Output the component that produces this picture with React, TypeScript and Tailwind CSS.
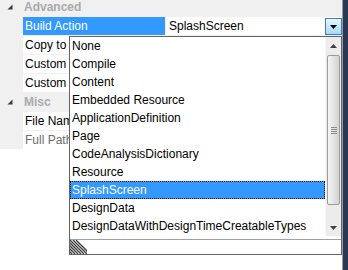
import React from "react";

type Row = {
  label: string;
  header?: boolean;
  selected?: boolean;
  muted?: boolean;
  value?: string;
};

// labels under the open list are clipped at the list's left edge
const rows: Row[] = [
  { label: "Advanced", header: true },
  { label: "Build Action", selected: true, value: "SplashScreen" },
  { label: "Copy to" },
  { label: "Custom" },
  { label: "Custom" },
  { label: "Misc", header: true },
  { label: "File Name" },
  { label: "Full Path", muted: true },
];

const actions = [
  "None",
  "Compile",
  "Content",
  "Embedded Resource",
  "ApplicationDefinition",
  "Page",
  "CodeAnalysisDictionary",
  "Resource",
  "SplashScreen",
  "DesignData",
  "DesignDataWithDesignTimeCreatableTypes",
];

const Expander = () => (
  <svg width="6" height="6" viewBox="0 0 6 6">
    <polygon points="5.5,0.5 5.5,5.5 0.5,5.5" fill="#3b3b3b" />
  </svg>
);

const Arrow = ({ up }: { up?: boolean }) => (
  <svg width="7" height="4" viewBox="0 0 7 4">
    <polygon points={up ? "3.5,0 7,4 0,4" : "0,0 7,0 3.5,4"} fill="#3f3f3f" />
  </svg>
);

const Scrollbar = () => (
  <div className="flex h-[199px] w-[16px] flex-col border-l border-[#f7f7f7] bg-[#ececec]">
    <div className="flex h-[17px] items-center justify-center">
      <Arrow up />
    </div>
    <div className="mx-[1px] mt-[1px] flex h-[150px] items-center justify-center rounded-[2px] border border-[#9c9c9c] bg-gradient-to-r from-[#f4f4f4] via-[#e4e4e4] to-[#d2d2d2]">
      <div className="flex w-[6px] flex-col gap-[1px]">
        <div className="h-[1px] bg-[#8c8c8c]" />
        <div className="h-[1px] bg-[#8c8c8c]" />
        <div className="h-[1px] bg-[#8c8c8c]" />
        <div className="h-[1px] bg-[#8c8c8c]" />
      </div>
    </div>
    <div className="flex-1" />
    <div className="flex h-[17px] items-center justify-center">
      <Arrow />
    </div>
  </div>
);

const Gripper = () => (
  <svg width="17" height="14" viewBox="0 0 17 14">
    <clipPath id="grip">
      <rect x="0" y="0" width="17" height="14" />
    </clipPath>
    <g clipPath="url(#grip)" stroke="#3a3a3a" strokeWidth="1.3">
      {[-12, -9, -6, -3, 0, 3, 6].map((c) => (
        <line key={c} x1={c} y1={0} x2={c + 14} y2={14} />
      ))}
    </g>
  </svg>
);

const DropList = () => (
  <div className="absolute left-[69px] top-[36px] flex h-[219px] w-[273px] flex-col border border-[#646464] bg-white">
    <div className="flex h-[202px]">
      <div className="flex flex-1 flex-col">
        {actions.map((a) =>
          a === "SplashScreen" ? (
            <div
              key={a}
              className="h-[18px] whitespace-nowrap border border-dotted border-black bg-[#3399ff] pl-[1px] leading-[16px] text-white"
            >
              {a}
            </div>
          ) : (
            <div key={a} className="h-[18px] whitespace-nowrap pl-[2px] leading-[18px] text-black">
              {a}
            </div>
          )
        )}
      </div>
      <Scrollbar />
    </div>
    <div className="h-[1px] bg-[#a0a0a0]" />
    <div className="flex h-[14px] items-end">
      <Gripper />
    </div>
  </div>
);

export default function App() {
  return (
    <div className="flex h-[270px] w-[348px] overflow-hidden bg-white font-['Liberation_Sans',Arial,sans-serif] text-[12px]">
      <div className="relative w-[343px] border-r border-[#9a9a9a]">
        <div className="-mt-[2px] flex flex-col gap-[1px] bg-[#f0f0f0]">
          {rows.map((r) =>
            r.header ? (
              <div key={r.label} className="flex h-[18px] items-center">
                <div className="flex w-[23px] justify-end pr-[10px]">
                  <Expander />
                </div>
                <span className="pl-[1px] font-bold text-[#a9a9ae]">{r.label}</span>
              </div>
            ) : (
              <div key={r.label + r.value} className="flex h-[18px]">
                <div className="w-[23px]" />
                <div
                  className={
                    r.selected
                      ? "w-[142px] overflow-hidden whitespace-nowrap bg-[#3399ff] pl-[2px] leading-[18px] text-white"
                      : r.muted
                        ? "w-[142px] overflow-hidden whitespace-nowrap bg-white pl-[2px] leading-[18px] text-[#6d6d6d]"
                        : "w-[142px] overflow-hidden whitespace-nowrap bg-white pl-[2px] leading-[18px] text-black"
                  }
                >
                  {r.selected ? (
                    r.label
                  ) : (
                    <div className="w-[44px] overflow-hidden">{r.label}</div>
                  )}
                </div>
                <div className="ml-[1px] flex flex-1 bg-white">
                  {r.value && (
                    <>
                      <span className="flex-1 pl-[3px] leading-[18px] text-black">{r.value}</span>
                      <div className="mt-[1px] flex h-[17px] w-[17px] items-center justify-center border border-[#3c7fb1] bg-gradient-to-b from-[#eaf6fd] to-[#a7d8f4]">
                        <svg width="7" height="4" viewBox="0 0 7 4">
                          <polygon points="0,0 7,0 3.5,4" fill="#000" />
                        </svg>
                      </div>
                    </>
                  )}
                </div>
              </div>
            )
          )}
        </div>
        <DropList />
      </div>
      <div className="flex-1 bg-[#293955]" />
    </div>
  );
}
